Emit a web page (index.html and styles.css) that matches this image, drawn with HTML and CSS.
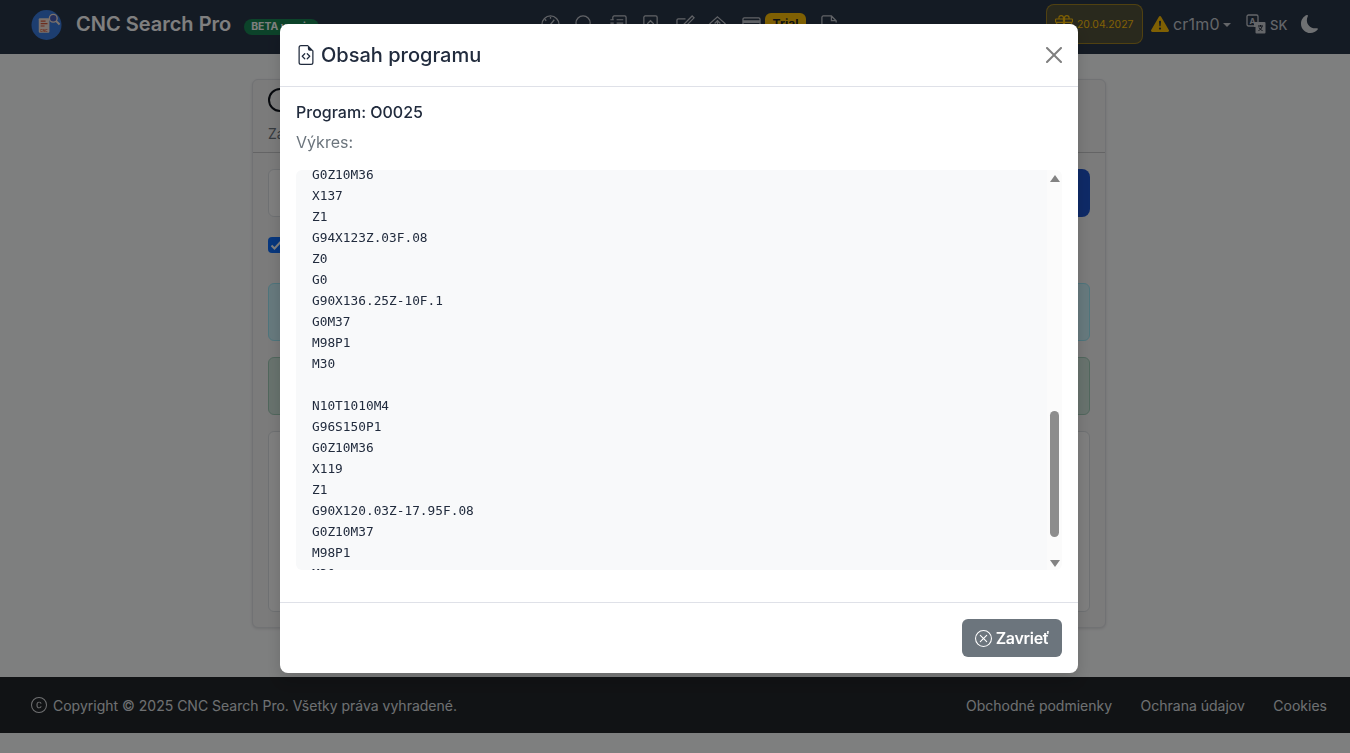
FILE: index.html
```html
<!DOCTYPE html>
<html lang="sk">
<head>
<meta charset="utf-8">
<title>CNC Search Pro</title>
<link rel="stylesheet" href="styles.css">
</head>
<body>
<div class="page">
  <header class="navbar">
    <a class="brand">
      <svg class="logo" viewBox="0 0 32 32">
        <circle cx="16" cy="16" r="15.5" fill="#3a7ce0"/>
        <rect x="8" y="9" width="11" height="15" rx="1" fill="#f6e3d8"/>
        <path d="M10 12h5M10 14.500h7M10 17h4" stroke="#d9583a" stroke-width="1.200"/>
        <text x="9.500" y="23" class="logo-cnc">CNC</text>
        <circle cx="23" cy="9" r="4" fill="#4a5fb8" stroke="#f6e3d8" stroke-width="1.400"/>
        <path d="M26 12l3.500 3.500" stroke="#f6e3d8" stroke-width="2"/>
      </svg>
      <span class="brand-name">CNC Search Pro</span>
      <span class="beta">BETA verzia</span>
    </a>
    <nav class="nav-icons">
      <svg class="ni n1" viewBox="0 0 20 20"><circle cx="10" cy="10" r="9"/><path d="M10 10l4-5M10 2v2M4 4.500l1.500 1.500M2 10h2"/></svg>
      <svg class="ni n2" viewBox="0 0 20 20"><circle cx="8.500" cy="8.500" r="7.500"/><path d="M14 14l5 5"/></svg>
      <svg class="ni n3" viewBox="0 0 20 20"><path d="M4 5V2.500A1.500 1.500 0 0 1 5.500 1h11A1.500 1.500 0 0 1 18 2.500v15a1.500 1.500 0 0 1-1.500 1.500h-11A1.500 1.500 0 0 1 4 17.500V15M8 5h7M8 8.500h7M8 12h7M1.500 5H5M1.500 8.500H5M1.500 12H5"/></svg>
      <svg class="ni n4" viewBox="0 0 20 20"><path d="M4.500 1h11A1.500 1.500 0 0 1 17 2.500v15a1.500 1.500 0 0 1-1.500 1.500h-11A1.500 1.500 0 0 1 3 17.500v-15A1.500 1.500 0 0 1 4.500 1z"/><path d="M7 9l3-3 3 3v4H7z"/></svg>
      <svg class="ni n5" viewBox="0 0 20 20"><path d="M16 10v7.500A1.500 1.500 0 0 1 14.500 19h-12A1.500 1.500 0 0 1 1 17.500v-12A1.500 1.500 0 0 1 2.500 4H10"/><path d="M17 1l2 2-9 9-3 1 1-3z"/></svg>
      <svg class="ni n6" viewBox="0 0 20 20"><path d="M10 2l8 7-8 9-8-9z"/><path d="M10 14V6M7 9l3-3 3 3"/></svg>
      <svg class="ni n7" viewBox="0 0 20 20"><rect x="1" y="3" width="18" height="14" rx="1.500"/><path d="M1 7h18" stroke-width="3"/></svg>
      <span class="trial">Trial</span>
      <svg class="ni n8" viewBox="0 0 20 20"><path d="M2 19V2.500A1.500 1.500 0 0 1 3.500 1H12l5 5v2M17 6h-5V1M9 14h10M16 11l3 3-3 3"/></svg>
    </nav>
    <div class="nav-right">
      <div class="expiry">
        <svg class="gift" viewBox="0 0 16 16"><path d="M3 2.500a2.500 2.500 0 0 1 5 0 2.500 2.500 0 0 1 5 0v.006c0 .07 0 .27-.038.494H15a1 1 0 0 1 1 1v2a1 1 0 0 1-1 1v7.500a1.500 1.500 0 0 1-1.500 1.500h-11A1.500 1.500 0 0 1 1 14.500V7a1 1 0 0 1-1-1V4a1 1 0 0 1 1-1h2.038A2.968 2.968 0 0 1 3 2.506V2.500zm1.068.5H7v-.5a1.500 1.500 0 1 0-3 0c0 .085.002.274.045.43a.522.522 0 0 0 .023.07zM9 3h2.932a.56.56 0 0 0 .023-.07c.043-.156.045-.345.045-.43a1.500 1.500 0 0 0-3 0V3zM1 4v2h6V4H1zm8 0v2h6V4H9zm5 3H9v8h4.500a.5.5 0 0 0 .5-.5V7zm-7 8V7H2v7.500a.5.5 0 0 0 .5.5H7z"/></svg>
        <span>20.04.2027</span>
      </div>
      <svg class="warn" viewBox="0 0 16 16"><path d="M8.982 1.566a1.130 1.130 0 0 0-1.960 0L.165 13.233c-.457.778.091 1.767.98 1.767h13.713c.889 0 1.438-.99.98-1.767L8.982 1.566zM8 5c.535 0 .954.462.9.995l-.35 3.507a.552.552 0 0 1-1.100 0L7.100 5.995A.905.905 0 0 1 8 5zm.002 6a1 1 0 1 1 0 2 1 1 0 0 1 0-2z"/></svg>
      <span class="user">cr1m0</span>
      <span class="caret"></span>
      <svg class="lang" viewBox="0 0 20 20">
        <rect x="1" y="1" width="11" height="11" rx="1.500" fill="none" stroke="currentColor" stroke-width="1.300"/>
        <text x="3.500" y="9.500" class="lang-a">A</text>
        <path d="M8 8h10.500a1 1 0 0 1 1 1v9.500a1 1 0 0 1-1 1h-8a1 1 0 0 1-1-1V13H8z" fill="currentColor"/>
        <path d="M12 12h5M14.500 11v1.500M16 12.500c-.500 2-2 3.500-3.500 4M13 13.500c.5 1.500 2 2.500 3.500 3" stroke="#1a2230" stroke-width="1" fill="none"/>
      </svg>
      <span class="lang-code">SK</span>
      <svg class="moon" viewBox="0 0 16 16"><path d="M6 .278a.768.768 0 0 1 .08.858 7.208 7.208 0 0 0-.878 3.460c0 4.021 3.278 7.277 7.318 7.277.527 0 1.040-.055 1.533-.16a.787.787 0 0 1 .81.316.733.733 0 0 1-.031.893A8.349 8.349 0 0 1 8.344 16C3.734 16 0 12.286 0 7.710 0 4.266 2.114 1.312 5.124.06A.752.752 0 0 1 6 .278z"/></svg>
    </div>
  </header>

  <main class="main">
    <section class="card">
      <div class="card-head">
        <div class="head-circle"></div>
        <p class="head-sub">Zadajte</p>
      </div>
      <div class="card-body">
        <div class="search-row">
          <div class="search-input"></div>
          <div class="search-btn"></div>
        </div>
        <div class="check-row"><span class="check"><svg viewBox="0 0 16 16"><path d="M3.500 8.500l3 3 6-6.500"/></svg></span></div>
        <div class="alert alert-info"></div>
        <div class="alert alert-success"></div>
        <div class="inner-card"></div>
      </div>
    </section>
  </main>

  <footer class="footer">
    <div class="copy">
      <svg class="copy-ic" viewBox="0 0 16 16"><path d="M8 15A7 7 0 1 1 8 1a7 7 0 0 1 0 14zm0 1A8 8 0 1 0 8 0a8 8 0 0 0 0 16z"/><path d="M8.146 4.992c-1.212 0-1.927.92-1.927 2.502v1.060c0 1.571.703 2.462 1.927 2.462.979 0 1.641-.586 1.729-1.418h1.295v.093c-.1 1.448-1.354 2.467-3.030 2.467-2.091 0-3.269-1.336-3.269-3.603V7.488c0-2.261 1.190-3.638 3.270-3.638 1.700 0 2.941 1.050 3.030 2.560v.093H9.875c-.088-.879-.768-1.511-1.729-1.511z" transform="matrix(.8 0 0 .8 1.600 1.600)"/></svg>
      <span>Copyright © 2025 CNC Search Pro. Všetky práva vyhradené.</span>
    </div>
    <nav class="foot-links">
      <a>Obchodné podmienky</a>
      <a>Ochrana údajov</a>
      <a>Cookies</a>
    </nav>
  </footer>
</div>

<div class="backdrop"></div>

<div class="modal">
  <div class="modal-head">
    <svg class="title-ic" viewBox="0 0 16 16"><path d="M14 4.500V14a2 2 0 0 1-2 2H4a2 2 0 0 1-2-2V2a2 2 0 0 1 2-2h5.500L14 4.500zm-3 0A1.500 1.500 0 0 1 9.500 3V1H4a1 1 0 0 0-1 1v12a1 1 0 0 0 1 1h8a1 1 0 0 0 1-1V4.500h-2z"/><path d="M8.646 6.646a.5.5 0 0 1 .708 0l2 2a.5.5 0 0 1 0 .708l-2 2a.5.5 0 0 1-.708-.708L10.293 9 8.646 7.354a.5.5 0 0 1 0-.708zm-1.292 0a.5.5 0 0 0-.708 0l-2 2a.5.5 0 0 0 0 .708l2 2a.5.5 0 0 0 .708-.708L5.707 9l1.647-1.646a.5.5 0 0 0 0-.708z"/></svg>
    <h5 class="modal-title">Obsah programu</h5>
    <svg class="close" viewBox="0 0 16 16"><path d="M.293.293a1 1 0 0 1 1.414 0L8 6.586 14.293.293a1 1 0 1 1 1.414 1.414L9.414 8l6.293 6.293a1 1 0 0 1-1.414 1.414L8 9.414l-6.293 6.293a1 1 0 0 1-1.414-1.414L6.586 8 .293 1.707a1 1 0 0 1 0-1.414z"/></svg>
  </div>
  <div class="modal-body">
    <div class="prog">Program: O0025</div>
    <div class="drawing">Výkres:</div>
    <div class="code-wrap">
      <div class="code-view"><pre class="code">G0Z10M36
X137
Z1
G94X123Z.03F.08
Z0
G0
G90X136.25Z-10F.1
G0M37
M98P1
M30

N10T1010M4
G96S150P1
G0Z10M36
X119
Z1
G90X120.03Z-17.95F.08
G0Z10M37
M98P1
M30</pre></div>
      <div class="sbar">
        <span class="arrow up"></span>
        <span class="thumb"></span>
        <span class="arrow down"></span>
      </div>
    </div>
  </div>
  <div class="modal-foot">
    <button class="btn-close-modal">
      <svg class="btn-ic" viewBox="0 0 16 16"><path d="M8 15A7 7 0 1 1 8 1a7 7 0 0 1 0 14zm0 1A8 8 0 1 0 8 0a8 8 0 0 0 0 16z"/><path d="M4.646 4.646a.5.5 0 0 1 .708 0L8 7.293l2.646-2.647a.5.5 0 0 1 .708.708L8.707 8l2.647 2.646a.5.5 0 0 1-.708.708L8 8.707l-2.646 2.647a.5.5 0 0 1-.708-.708L7.293 8 4.646 5.354a.5.5 0 0 1 0-.708z"/></svg>
      <span>Zavrieť</span>
    </button>
  </div>
</div>
</body>
</html>
```
FILE: styles.css
```css
* { box-sizing: border-box; }
html, body { margin: 0; height: 100%; }
body {
  font-family: Inter, "Noto Sans", sans-serif;
  font-size: 16px;
  color: #212b3d;
  background: #fdfeff;
  overflow: hidden;
}
.page { height: 733px; display: flex; flex-direction: column; }

.navbar {
  height: 54px;
  flex: none;
  background: #293649;
  display: flex;
  align-items: center;
  position: relative;
  padding-left: 31px;
}
.brand { display: flex; align-items: center; width: 510px; }
.logo { width: 31px; height: 32px; margin-top: -5px; }
.logo-cnc { font: 700 3.400px Inter, sans-serif; fill: #d9583a; }
.brand-name {
  color: #fff;
  font-size: 20px;
  font-weight: 600;
  margin-left: 14px;
  margin-top: -7px;
}
.beta {
  margin-left: 13px;
  background: #198754;
  color: #fff;
  font-size: 10.400px;
  font-weight: 700;
  padding: 2px 7px;
  border-radius: 8px;
  line-height: 12px;
}
.nav-icons { display: flex; align-items: center; height: 54px; margin-top: -6px; }
.ni {
  width: 19px;
  height: 19px;
  fill: none;
  stroke: #c3c7ce;
  stroke-width: 1.300;
  flex: none;
}
.n2 { margin-left: 15px; }
.n3 { margin-left: 15px; }
.n4 { margin-left: 13px; }
.n5 { margin-left: 16px; }
.n6 { margin-left: 13px; }
.n7 { margin-left: 15px; }
.trial {
  background: #ffc107;
  color: #212529;
  font-size: 12px;
  font-weight: 700;
  width: 41px;
  text-align: center;
  padding: 3px 0;
  border-radius: 6px;
  margin-left: 4px;
  margin-top: -2px;
  line-height: 15px;
}
.n8 { margin-left: 14px; }

.nav-right {
  margin-left: auto;
  display: flex;
  align-items: center;
  color: #c8ccd2;
  padding-right: 31px;
  margin-top: -6px;
}
.expiry {
  display: flex;
  align-items: center;
  gap: 4px;
  width: 97px;
  height: 40px;
  padding-left: 8px;
  border: 1px solid rgba(255,193,7,.45);
  border-radius: 8px;
  background: rgba(255,193,7,.2);
  color: #ffc107;
  font-size: 10.400px;
}
.gift { width: 18px; height: 18px; fill: currentColor; flex: none; }
.warn { width: 18px; height: 18px; fill: #ffc107; margin-left: 8px; }
.user { font-size: 16px; margin-left: 4px; width: 45px; letter-spacing: .2px; }
.caret {
  width: 0; height: 0;
  border-left: 4px solid transparent;
  border-right: 4px solid transparent;
  border-top: 4px solid currentColor;
  margin-left: 5px;
  margin-top: 1px;
}
.lang { width: 20px; height: 20px; margin-left: 15px; color: #c8ccd2; }
.lang-a { font: 700 8px Inter, sans-serif; fill: currentColor; }
.lang-code { font-size: 13px; font-weight: 500; margin-left: 4px; margin-top: 2px; width: 16px; }
.moon { width: 18px; height: 18px; fill: #dfe2e6; margin-left: 15px; }

.main { flex: 1; padding: 25px 0 0 252px; min-height: 0; }
.card {
  width: 854px;
  height: 549px;
  background: #f6f6f6;
  border: 1px solid #e2e4e8;
  border-radius: 6px;
  box-shadow: 0 1px 3px rgba(0,0,0,.12);
  overflow: hidden;
}
.card-head {
  height: 73px;
  padding: 8px 15px 0;
  border-bottom: 1px solid #c8c9cb;
}
.head-circle {
  width: 24px; height: 24px;
  border: 2px solid #10141c;
  border-radius: 50%;
}
.head-sub { margin: 12px 0 0; font-size: 14px; color: #6c757d; line-height: 20px; }
.card-body { padding: 16px 15px 0; display: flex; flex-direction: column; }
.search-row { display: flex; height: 48px; }
.search-input {
  flex: 1;
  background: #fff;
  border: 1px solid #dee2e6;
  border-radius: 6px 0 0 6px;
}
.search-btn { width: 100px; background: #1e55cf; border-radius: 0 8px 8px 0; }
.check-row { height: 66px; padding-top: 20px; }
.check {
  display: block;
  width: 16px; height: 16px;
  background: #0d6efd;
  border-radius: 4px;
}
.check svg { display: block; fill: none; stroke: #fff; stroke-width: 2; }
.alert { height: 58px; border-radius: 6px; margin-bottom: 16px; border: 1px solid; }
.alert-info { background: #cff4fc; border-color: #9eeaf9; }
.alert-success { background: #d1e7dd; border-color: #a3cfbb; }
.inner-card {
  height: 181px;
  background: #fff;
  border: 1px solid #dee2e6;
  border-radius: 6px;
}

.footer {
  height: 56px;
  flex: none;
  background: #23262a;
  color: #dfe1e4;
  font-size: 14px;
  display: flex;
  align-items: center;
  justify-content: space-between;
  padding: 0 23px 0 31px;
}
.copy { display: flex; align-items: center; gap: 6px; }
.copy-ic { width: 16px; height: 16px; fill: currentColor; flex: none; }
.foot-links { display: flex; gap: 28.500px; }

.backdrop { position: fixed; inset: 0; background: rgba(0,0,0,.5); }

.modal {
  position: fixed;
  left: 280px;
  top: 24px;
  width: 798px;
  height: 649px;
  background: #fff;
  border-radius: 8px;
  box-shadow: 0 8px 16px rgba(0,0,0,.15);
  display: flex;
  flex-direction: column;
}
.modal-head {
  height: 63px;
  flex: none;
  display: flex;
  align-items: center;
  padding: 0 16px;
  border-bottom: 1px solid #dfe1e8;
}
.title-ic { width: 20px; height: 20px; fill: #212b3d; margin-right: 5px; flex: none; }
.modal-title { margin: 0; font-size: 20px; font-weight: 500; line-height: 24px; flex: 1; color: #212b3d; }
.close { width: 16px; height: 16px; fill: #7f7f7f; margin-right: 0; flex: none; }
.modal-body { flex: 1; padding: 16px 16px 0; min-height: 0; }
.prog { font-size: 16px; font-weight: 500; line-height: 19px; color: #212b3d; }
.drawing { font-size: 16px; line-height: 19px; color: #6c757d; margin-top: 11px; }
.code-wrap {
  margin-top: 18px;
  height: 400px;
  display: flex;
  border-radius: 6px;
  overflow: hidden;
}
.code-view { flex: 1; background: #f8f9fa; overflow: hidden; }
.code {
  margin: -6px 0 0;
  padding: 0 16px;
  font-family: "DejaVu Sans Mono", monospace;
  font-size: 12.800px;
  line-height: 21px;
  color: #212b3d;
}
.sbar {
  width: 15px;
  flex: none;
  background: #fbfbfb;
  display: flex;
  flex-direction: column;
  align-items: center;
  position: relative;
}
.arrow {
  width: 0; height: 0;
  border-left: 5px solid transparent;
  border-right: 5px solid transparent;
  position: absolute;
}
.up { top: 5px; border-bottom: 7px solid #828282; }
.down { bottom: 3px; border-top: 7px solid #828282; }
.thumb {
  position: absolute;
  top: 241px;
  width: 9px;
  height: 126px;
  background: #8d8d8d;
  border-radius: 5px;
}
.modal-foot {
  height: 71px;
  flex: none;
  display: flex;
  align-items: center;
  justify-content: flex-end;
  padding: 0 16px;
  border-top: 1px solid #dfe1e8;
}
.btn-close-modal {
  width: 100px;
  height: 38px;
  background: #6c757d;
  color: #fff;
  border: 0;
  border-radius: 6px;
  font: 600 16px Inter, sans-serif;
  letter-spacing: -.3px;
  display: flex;
  align-items: center;
  justify-content: center;
  gap: 4px;
  padding: 0;
}
.btn-ic { width: 17px; height: 17px; fill: currentColor; flex: none; }
```
